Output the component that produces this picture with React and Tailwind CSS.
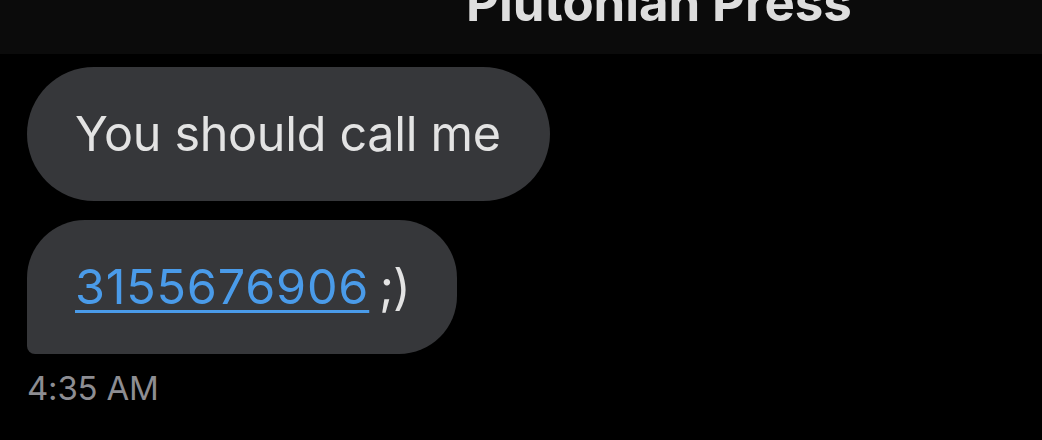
export default function App() {
  return (
    <div
      className="w-[1042px] h-[440px] overflow-hidden bg-black"
      style={{ fontFamily: 'Inter, "Noto Sans", sans-serif' }}
    >
      {/* conversation header, title partly scrolled out */}
      <header className="h-[54px] bg-[#0b0b0b] overflow-hidden pl-[466px]">
        <h1 className="text-[51px] font-bold leading-none text-[#dedede] -mt-[23px] tracking-[-0.1px]">
          Plutonian Press
        </h1>
      </header>

      <div className="flex flex-col items-start pl-[27px] pt-[13px]">
        <div className="h-[134px] rounded-full bg-[#36373a] flex items-center pl-[48px] pr-[49px]">
          <span className="text-[48.5px] text-[#e3e3e3] leading-none tracking-[-0.3px]">
            You should call me
          </span>
        </div>

        <div className="mt-[19px] h-[134px] rounded-[58px] rounded-bl-[8px] bg-[#36373a] flex items-center pl-[48px] pr-[47px]">
          <span className="text-[48.5px] text-[#e3e3e3] leading-none tracking-[-0.3px]">
            <a className="text-[#4a9be9] underline decoration-[3px] underline-offset-[6px] tracking-[0.8px]">
              3155676906
            </a>
            <span className="ml-[10px] tracking-[-1px]">;)</span>
          </span>
        </div>

        <span className="mt-[18px] text-[33px] text-[#8d8d92] leading-none tracking-[-0.2px]">
          4:35 AM
        </span>
      </div>
    </div>
  );
}
